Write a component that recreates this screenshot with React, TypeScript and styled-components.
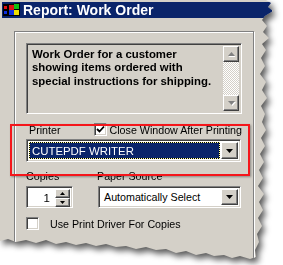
import styled, { createGlobalStyle } from "styled-components";

const GlobalStyle = createGlobalStyle`
  body {
    margin: 0;
    background: #fff;
  }
`;

const Stage = styled.div`
  position: relative;
  width: 283px;
  height: 265px;
  overflow: hidden;
  background: #fff;
  font-family: "Liberation Sans", Arial, sans-serif;
`;

const ShadowWrap = styled.div`
  width: 274px;
  height: 262px;
  filter: drop-shadow(3px 4px 3px rgba(0, 0, 0, 0.65));
`;

const Dialog = styled.div`
  height: 100%;
  padding: 2px;
  box-sizing: border-box;
  background: #d4d0c8;
  display: flex;
  flex-direction: column;
  clip-path: polygon(
    0 0, 266px 0, 271px 3px, 268px 7px, 273px 11px, 265px 16px, 262px 20px,
    267px 26px, 263px 32px, 269px 38px, 262px 44px, 266px 50px, 261px 58px,
    265px 66px, 260px 74px, 266px 82px, 262px 90px, 267px 98px, 261px 106px,
    265px 114px, 262px 122px, 266px 130px, 261px 138px, 265px 146px, 260px 154px,
    264px 162px, 259px 170px, 263px 178px, 258px 186px, 264px 194px, 259px 202px,
    263px 210px, 258px 218px, 262px 226px, 257px 234px, 259px 242px, 255px 250px,
    256px 257px, 250px 259px, 240px 256px, 232px 258px, 224px 255px, 214px 256px,
    206px 253px, 196px 255px, 186px 251px, 176px 253px, 166px 249px, 156px 250px,
    146px 247px, 136px 249px, 126px 246px, 116px 247px, 106px 244px, 96px 246px,
    86px 243px, 76px 245px, 66px 242px, 56px 244px, 46px 240px, 36px 243px,
    26px 240px, 16px 242px, 8px 239px, 0 241px
  );
`;

const TitleBar = styled.div`
  height: 17px;
  display: flex;
  align-items: center;
  gap: 2px;
  padding-left: 1px;
  background: #0a246a;
  color: #fff;
  font-weight: bold;
  font-size: 14px;
  white-space: nowrap;
`;

const Body = styled.div`
  padding: 13px 0 0 12px;
`;

const Frame = styled.div`
  width: 240px;
  height: 240px;
  box-sizing: border-box;
  padding: 11px 11px 0 11px;
  border: 1px solid #808080;
  box-shadow: 1px 1px 0 #fff, inset 1px 1px 0 #fff;
  display: flex;
  flex-direction: column;
  font-size: 10.7px;
  color: #000;
`;

const Sunken = styled.div`
  box-sizing: border-box;
  border: 1px solid;
  border-color: #808080 #fff #fff #808080;
  box-shadow: inset 1px 1px 0 #404040, inset -1px -1px 0 #d4d0c8;
`;

const DescBox = styled(Sunken)`
  height: 71px;
  padding: 2px;
  display: flex;
  background: #d4d0c8;
`;

const DescText = styled.div`
  flex: 1;
  padding: 2px 0 0 3px;
  font-weight: bold;
  font-size: 11.4px;
  line-height: 13.3px;
`;

const ScrollBar = styled.div`
  width: 16px;
  display: flex;
  flex-direction: column;
  background-color: #fff;
  background-image: repeating-conic-gradient(#d4d0c8 0 25%, #fff 0 50%);
  background-size: 2px 2px;
`;

const RaisedButton = styled.div<{ $h?: number; $w?: number }>`
  box-sizing: border-box;
  width: ${(p) => p.$w ?? 16}px;
  height: ${(p) => (p.$h ? `${p.$h}px` : "auto")};
  border: 1px solid;
  border-color: #fff #404040 #404040 #fff;
  box-shadow: inset -1px -1px 0 #808080;
  background: #d4d0c8;
  display: flex;
  align-items: center;
  justify-content: center;
  flex-shrink: 0;
`;

const ScrollGap = styled.div`
  flex: 1;
`;

const PrinterRow = styled.div`
  margin-top: 8px;
  height: 15px;
  display: flex;
  align-items: center;
`;

const Label = styled.span<{ $w?: number; $pad?: number }>`
  width: ${(p) => (p.$w ? `${p.$w}px` : "auto")};
  padding-left: ${(p) => p.$pad ?? 0}px;
  white-space: nowrap;
`;

const CheckBox = styled(Sunken)`
  width: 13px;
  height: 13px;
  background: #fff;
  display: flex;
  align-items: center;
  justify-content: center;
  flex-shrink: 0;
`;

const CheckLabel = styled.span<{ $gap: number }>`
  margin-left: ${(p) => p.$gap}px;
  white-space: nowrap;
`;

const Select = styled(Sunken)<{ $w: number; $h: number; $top: number }>`
  width: ${(p) => p.$w}px;
  height: ${(p) => p.$h}px;
  margin-top: ${(p) => p.$top}px;
  padding: 2px;
  background: #fff;
  display: flex;
  gap: 1px;
`;

const Highlight = styled.div`
  flex: 1;
  box-sizing: border-box;
  background: #0a246a;
  color: #fff;
  border: 1px solid #000;
  outline: 1px dotted #ffffa0;
  outline-offset: -1px;
  padding-left: 2px;
  font-size: 11.4px;
  display: flex;
  align-items: center;
`;

const Value = styled.div`
  flex: 1;
  padding-left: 3px;
  display: flex;
  align-items: center;
`;

const LabelsRow = styled.div`
  margin-top: 7px;
  height: 13px;
  display: flex;
  align-items: center;
`;

const ControlsRow = styled.div`
  margin-top: 4px;
  display: flex;
  gap: 25px;
`;

const Spin = styled(Sunken)`
  width: 47px;
  height: 22px;
  padding: 2px;
  background: #fff;
  display: flex;
`;

const SpinValue = styled.div`
  flex: 1;
  text-align: right;
  padding-right: 5px;
  line-height: 18px;
  font-size: 11.5px;
`;

const SpinButtons = styled.div`
  display: flex;
  flex-direction: column;
`;

const OptionRow = styled.div`
  margin-top: 9px;
  height: 13px;
  display: flex;
  align-items: center;
`;

const Annotation = styled.div`
  position: absolute;
  left: 10px;
  top: 124px;
  width: 240px;
  height: 52px;
  box-sizing: border-box;
  border: 2px solid #f5161b;
  box-shadow: 1px 1px 2px rgba(0, 0, 0, 0.35);
`;

const AppIcon = () => (
  <svg width="18" height="14" viewBox="0 0 18 14">
    <rect x="0" y="1" width="5" height="12" fill="#000" />
    <rect x="1" y="3" width="3" height="3" fill="#e01010" />
    <rect x="1" y="8" width="3" height="3" fill="#1030e0" />
    <path d="M5 1 L17 0 L17 13 L5 13 Z" fill="#000" />
    <rect x="6" y="2" width="5" height="5" fill="#e01010" />
    <rect x="11" y="1" width="5" height="5" fill="#10c010" />
    <rect x="6" y="7" width="5" height="5" fill="#1030e0" />
    <rect x="11" y="7" width="5" height="5" fill="#f0e000" />
  </svg>
);

const Arrow = ({ dir, grey }: { dir: "up" | "down"; grey?: boolean }) => (
  <svg width="7" height="4" viewBox="0 0 7 4" style={{ overflow: "visible" }}>
    {grey && (
      <path
        d={dir === "up" ? "M4 1 L7.5 5 L0.5 5 Z" : "M1 1 L8 1 L4.5 5 Z"}
        fill="#fff"
      />
    )}
    <path
      d={dir === "up" ? "M3.5 0 L7 4 L0 4 Z" : "M0 0 L7 0 L3.5 4 Z"}
      fill={grey ? "#808080" : "#000"}
    />
  </svg>
);

const SmallArrow = ({ dir }: { dir: "up" | "down" }) => (
  <svg width="5" height="3" viewBox="0 0 5 3">
    <path d={dir === "up" ? "M2.5 0 L5 3 L0 3 Z" : "M0 0 L5 0 L2.5 3 Z"} fill="#000" />
  </svg>
);

const Check = () => (
  <svg width="9" height="9" viewBox="0 0 9 9">
    <path d="M1 4 L3.5 6.5 L8 1.5" stroke="#000" strokeWidth="1.8" fill="none" />
  </svg>
);

const App = () => {
  return (
    <Stage>
      <GlobalStyle />
      <ShadowWrap>
        <Dialog>
          <TitleBar>
            <AppIcon />
            Report: Work Order
          </TitleBar>
          <Body>
            <Frame>
              <DescBox>
                <DescText>
                  Work Order for a customer
                  <br />
                  showing items ordered with
                  <br />
                  special instructions for shipping.
                </DescText>
                <ScrollBar>
                  <RaisedButton $h={16}>
                    <Arrow dir="up" grey />
                  </RaisedButton>
                  <ScrollGap />
                  <RaisedButton $h={16}>
                    <Arrow dir="down" grey />
                  </RaisedButton>
                </ScrollBar>
              </DescBox>

              <PrinterRow>
                <Label $w={65} $pad={3}>
                  Printer
                </Label>
                <CheckBox>
                  <Check />
                </CheckBox>
                <CheckLabel $gap={3}>Close Window After Printing</CheckLabel>
              </PrinterRow>

              <Select $w={215} $h={23} $top={2}>
                <Highlight>CUTEPDF WRITER</Highlight>
                <RaisedButton $w={17}>
                  <Arrow dir="down" />
                </RaisedButton>
              </Select>

              <LabelsRow>
                <Label $w={71}>Copies</Label>
                <Label>Paper Source</Label>
              </LabelsRow>

              <ControlsRow>
                <Spin>
                  <SpinValue>1</SpinValue>
                  <SpinButtons>
                    <RaisedButton $w={15} $h={9}>
                      <SmallArrow dir="up" />
                    </RaisedButton>
                    <RaisedButton $w={15} $h={9}>
                      <SmallArrow dir="down" />
                    </RaisedButton>
                  </SpinButtons>
                </Spin>
                <Select $w={143} $h={22} $top={0}>
                  <Value>Automatically Select</Value>
                  <RaisedButton $w={17}>
                    <Arrow dir="down" />
                  </RaisedButton>
                </Select>
              </ControlsRow>

              <OptionRow>
                <CheckBox />
                <CheckLabel $gap={11}>Use Print Driver For Copies</CheckLabel>
              </OptionRow>
            </Frame>
          </Body>
        </Dialog>
      </ShadowWrap>
      <Annotation />
    </Stage>
  );
};

export default App;
